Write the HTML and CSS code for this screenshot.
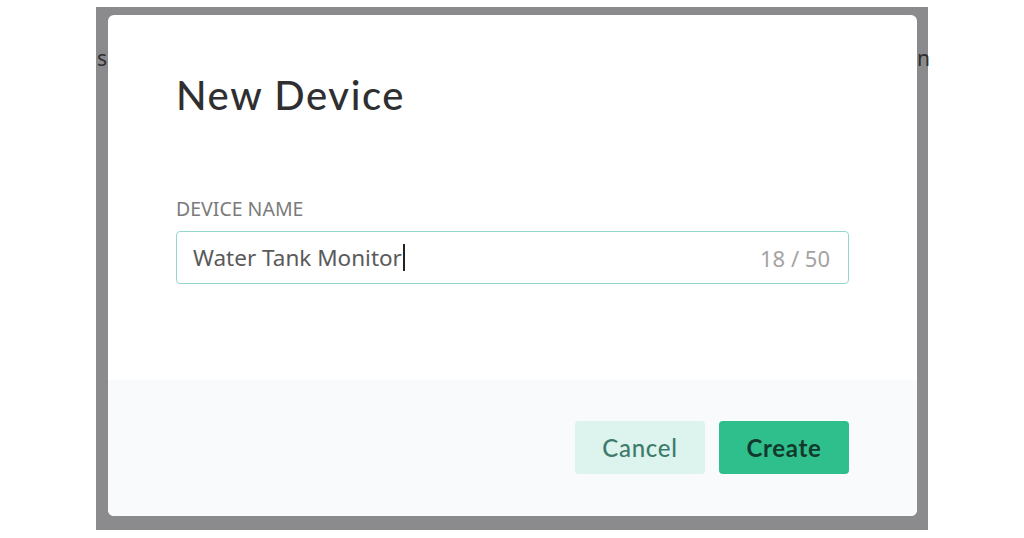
FILE: index.html
```html
<!DOCTYPE html>
<html>
<head>
    <title>New Device</title>
    <link rel="stylesheet" href="styles.css">
</head>
<body>
    <div class="backdrop">
        <div class="behind">
            <span class="behind-left">s</span>
            <span class="behind-right">n</span>
        </div>

        <div class="modal">
            <div class="modal-body">
                <h1 class="modal-title">New Device</h1>
                <label class="field-label" for="deviceName">DEVICE NAME</label>
                <div class="field">
                    <span class="field-value" id="deviceName">Water Tank Monitor<span class="caret"></span></span>
                    <span class="field-count">18 / 50</span>
                </div>
            </div>
            <div class="modal-footer">
                <button class="btn btn-cancel">Cancel</button>
                <button class="btn btn-create">Create</button>
            </div>
        </div>
    </div>
</body>
</html>
```

FILE: styles.css
```css
body {
    margin: 0;
    padding: 7px 0 0 96px;
    background-color: #ffffff;
    font-family: "Noto Sans", sans-serif;
}

.backdrop {
    position: relative;
    width: 832px;
    height: 523px;
    background-color: #8b8b8d;
}

/* page text peeking out behind the dialog */
.behind {
    display: flex;
    justify-content: space-between;
    padding: 37px 0 0 1px;
    font-size: 21px;
    color: #2e2e2e;
}

.behind-right {
    margin-right: -2px;
}

.modal {
    position: absolute;
    top: 8px;
    left: 12px;
    right: 11px;
    bottom: 14px;
    background-color: #ffffff;
    border-radius: 6px;
    display: flex;
    flex-direction: column;
    overflow: hidden;
}

.modal-body {
    flex: 1;
    padding: 0 68px;
}

.modal-title {
    margin: 56px 0 0 0;
    font-family: Lato, sans-serif;
    font-weight: 500;
    font-size: 40px;
    letter-spacing: 1.6px;
    line-height: 48px;
    color: #2f2f31;
}

.field-label {
    display: block;
    margin-top: 78px;
    font-size: 19.5px;
    line-height: 24px;
    color: #7b7b7b;
}

.field {
    display: flex;
    justify-content: space-between;
    align-items: center;
    margin-top: 10px;
    height: 51px;
    padding: 0 18px 0 16px;
    border: 1px solid #94d6cf;
    border-radius: 4px;
}

.field-value {
    font-size: 22.5px;
    color: #5a5a5a;
    display: flex;
    align-items: center;
}

.caret {
    display: inline-block;
    width: 2px;
    height: 27px;
    margin-left: 1px;
    background-color: #222222;
}

.field-count {
    font-size: 22px;
    color: #a3a3a3;
}

.modal-footer {
    height: 136px;
    box-sizing: border-box;
    padding: 41px 68px 0 0;
    background-color: #f8fafb;
    display: flex;
    justify-content: flex-end;
    align-items: flex-start;
    gap: 14px;
}

.btn {
    height: 53px;
    width: 130px;
    border: none;
    border-radius: 4px;
    font-family: Lato, sans-serif;
    font-size: 24px;
    letter-spacing: 0.7px;
    cursor: pointer;
}

.btn-cancel {
    background-color: #ddf4ee;
    color: #3f7b6b;
    font-weight: 500;
}

.btn-create {
    background-color: #2fbf8c;
    color: #123a2c;
    font-weight: 700;
}
```
